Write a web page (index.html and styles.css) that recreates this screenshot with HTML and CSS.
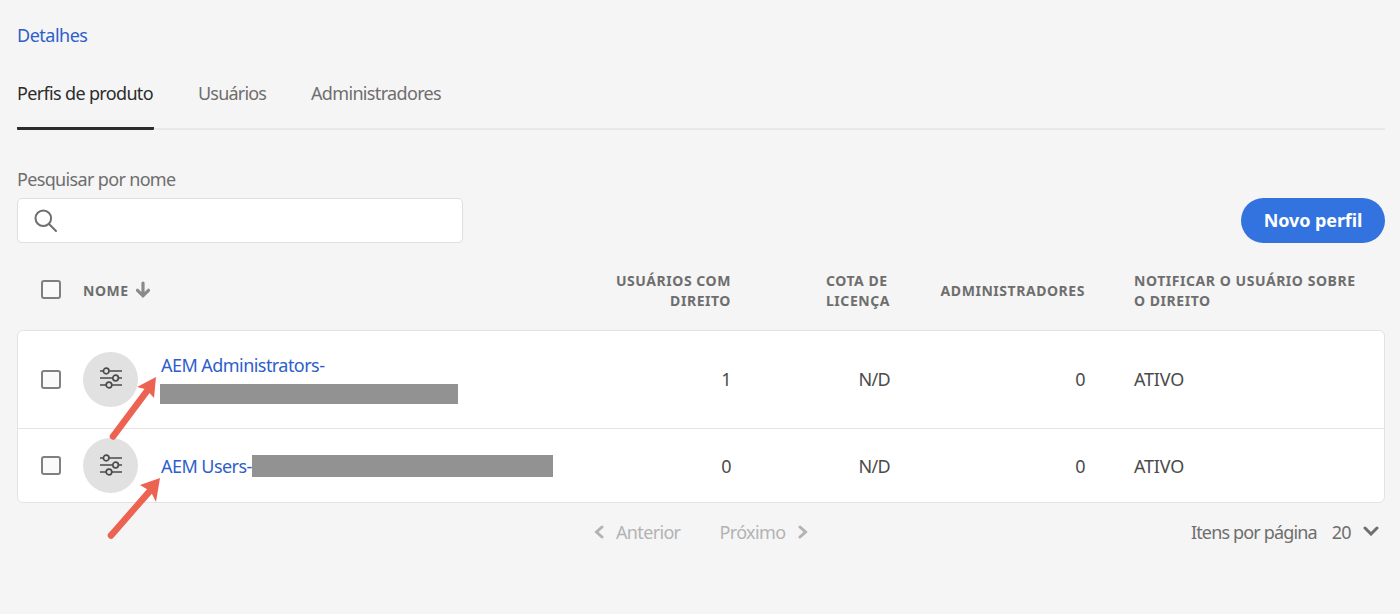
FILE: index.html
```html
<!DOCTYPE html>
<html lang="pt-BR">
<head>
<meta charset="utf-8">
<title>Perfis de produto</title>
<link rel="stylesheet" href="styles.css">
</head>
<body>
<svg class="defs" aria-hidden="true">
  <symbol id="sliders" viewBox="0 0 22 22">
    <path d="M0 4h3.2M9.2 4H22M0 11h12.6M18.6 11H22M0 18h6M12 18h10"/>
    <circle cx="6.2" cy="4" r="2.800"/><circle cx="15.6" cy="11" r="2.800"/><circle cx="9" cy="18" r="2.800"/>
  </symbol>
</svg>
<main class="page">
  <a class="details">Detalhes</a>
  <nav class="tabs">
    <a class="tab tab-active">Perfis de produto</a>
    <a class="tab tab-users">Usuários</a>
    <a class="tab">Administradores</a>
  </nav>
  <div class="toolbar">
    <div class="search">
      <label class="label">Pesquisar por nome</label>
      <div class="input">
        <svg class="magnifier" viewBox="0 0 24 24"><circle cx="9.3" cy="9.3" r="7.8"/><path d="M15 15l7 7"/></svg>
      </div>
    </div>
    <button class="cta">Novo perfil</button>
  </div>

  <div class="grid head">
    <span class="check"></span>
    <div class="col-name"><span>NOME</span>
      <svg class="sort" viewBox="0 0 16 18"><path d="M8 2v12M2.5 9.3L8 14.8l5.5-5.5"/></svg>
    </div>
    <div class="num">USUÁRIOS COM<br>DIREITO</div>
    <div class="num quota"><span>COTA DE<br>LICENÇA</span></div>
    <div class="num">ADMINISTRADORES</div>
    <div class="notify">NOTIFICAR O USUÁRIO SOBRE<br>O DIREITO</div>
  </div>

  <div class="table">
    <div class="grid row row-first">
      <span class="check"></span>
      <div class="profile">
        <span class="avatar"><svg class="sliders"><use href="#sliders"/></svg></span>
        <div class="name-stack"><a class="link">AEM Administrators-</a><span class="mask mask-a"></span></div>
      </div>
      <div class="num">1</div>
      <div class="num">N/D</div>
      <div class="num">0</div>
      <div class="notify">ATIVO</div>
    </div>
    <div class="grid row row-second">
      <span class="check"></span>
      <div class="profile">
        <span class="avatar"><svg class="sliders"><use href="#sliders"/></svg></span>
        <div class="name-inline"><a class="link">AEM Users-</a><span class="mask mask-b"></span></div>
      </div>
      <div class="num">0</div>
      <div class="num">N/D</div>
      <div class="num">0</div>
      <div class="notify">ATIVO</div>
    </div>
    <svg class="arrows" viewBox="0 0 70 180">
      <path class="shaft" d="M13 76.500L47 31M11 175.500L49 132"/>
      <path class="tip" d="M56 17L54 38L50 33.500L45 29L37 27zM60 118L56 142L52 134L47.500 129.500L40 125z"/>
    </svg>
  </div>

  <footer class="footer">
    <div class="pager">
      <svg class="chev" viewBox="0 0 10 14"><path d="M8 2L2.5 7L8 12"/></svg>
      <span class="prev">Anterior</span>
      <span class="next">Próximo</span>
      <svg class="chev" viewBox="0 0 10 14"><path d="M2 2l5.500 5L2 12"/></svg>
    </div>
    <div class="per-page">
      <span class="items">Itens por página</span><span class="count">20</span>
      <svg class="down" viewBox="0 0 16 10"><path d="M2 2l6 6l6-6"/></svg>
    </div>
  </footer>
</main>
</body>
</html>
```
FILE: styles.css
```css
* { box-sizing: border-box; }
body {
  margin: 0;
  background: #f5f5f5;
  color: #4b4b4b;
  font-family: "Noto Sans", "Open Sans", sans-serif;
  font-size: 18px;
  letter-spacing: -0.66px;
  line-height: 24px;
}
.defs { display: none; }
svg { fill: none; stroke: #6e6e6e; flex: none; }
.page { padding: 23px 15px 0 17px; height: 614px; overflow: hidden; white-space: nowrap; }
.details { display: block; color: #2d5ecb; letter-spacing: -0.5px; }
.tabs {
  display: flex;
  gap: 44px;
  height: 49px;
  margin-top: 34px;
  box-shadow: inset 0 -2px #e8e8e8;
  color: #6e6e6e;
}
.tab { height: 49px; }
.tab-active { width: 137px; color: #2c2c2c; border-bottom: 3px solid #2c2c2c; border-radius: 1px; }
.tab-users { width: 69px; letter-spacing: -0.8px; }
.toolbar { display: flex; justify-content: space-between; align-items: flex-end; margin-top: 37px; }
.label { display: block; color: #6e6e6e; height: 31px; }
.input {
  display: flex;
  align-items: center;
  width: 446px;
  height: 45px;
  padding-left: 16px;
  background: #fff;
  border: 1px solid #dfdfdf;
  border-radius: 5px;
}
.magnifier { width: 24px; height: 24px; stroke-width: 2; stroke-linecap: round; }
.cta {
  width: 144px;
  height: 45px;
  padding: 0 0 2px;
  border: 0;
  border-radius: 23px;
  background: #3273df;
  color: #fff;
  font: inherit;
  font-weight: 700;
  letter-spacing: -0.1px;
}
.grid {
  display: grid;
  grid-template-columns: 42px 500px 148px 159px 195px 1fr;
  align-items: center;
  padding-left: 24px;
}
.head {
  height: 87px;
  padding-top: 9px;
  color: #6e6e6e;
  font-size: 14px;
  font-weight: 700;
  line-height: 20px;
  letter-spacing: 0.55px;
}
.head .check { margin-bottom: 3px; }
.num { text-align: right; }
.row .num { padding-right: 0; }
.quota span { display: inline-block; text-align: left; }
.notify { padding-left: 49px; }
.row .notify { letter-spacing: -0.2px; }
.col-name { display: flex; align-items: center; gap: 6px; }
.sort { width: 16px; height: 18px; margin-bottom: 2px; stroke: #8a8a8a; stroke-width: 3.200; stroke-linecap: round; }
.check { width: 20px; height: 19px; border: 2px solid #808080; border-radius: 3px; background: #fafafa; }
.table { position: relative; height: 173px; background: #fff; border: 1px solid #e3e3e3; border-radius: 6px; }
.row { padding-left: 23px; }
.row-first { height: 98px; border-bottom: 1px solid #e3e3e3; }
.row-second { height: 73px; }
.row-first .num, .row-first .notify { padding-bottom: 1px; }
.profile { display: flex; align-items: center; gap: 23px; }
.avatar { display: grid; place-items: center; width: 55px; height: 55px; padding-bottom: 3px; border-radius: 50%; background: #e1e1e1; }
.row-second .avatar { padding-bottom: 1px; }
.sliders { width: 22px; height: 22px; stroke: #4b4b4b; stroke-width: 1.700; }
.link { display: block; color: #2d5ecb; letter-spacing: -0.55px; }
.name-stack { padding-bottom: 3px; }
.mask { display: block; background: #929292; }
.mask-a { width: 298px; height: 20px; margin: 7px 0 0 -1px; }
.name-inline { display: flex; align-items: center; }
.mask-b { width: 301px; height: 22px; }
.arrows { position: absolute; left: 82px; top: 29px; width: 70px; height: 180px; }
.arrows .shaft { stroke: #ec6352; stroke-width: 6.500; stroke-linecap: round; }
.arrows .tip { fill: #ec6352; stroke: none; }
.footer { display: grid; grid-template-columns: 1fr auto; align-items: center; padding: 17px 6px 0 577px; color: #6e6e6e; }
.pager { display: flex; align-items: center; color: #b3b3b3; }
.chev { width: 10px; height: 14px; stroke: #b3b3b3; stroke-width: 3; stroke-linecap: round; }
.prev { margin: 0 39px 0 12px; }
.next { margin-right: 12px; letter-spacing: -0.6px; }
.per-page { display: flex; align-items: center; }
.items { letter-spacing: -0.85px; }
.count { margin: 0 12px 0 15px; }
.down { width: 16px; height: 10px; margin-top: -2px; stroke-width: 3; stroke-linecap: round; }
```
